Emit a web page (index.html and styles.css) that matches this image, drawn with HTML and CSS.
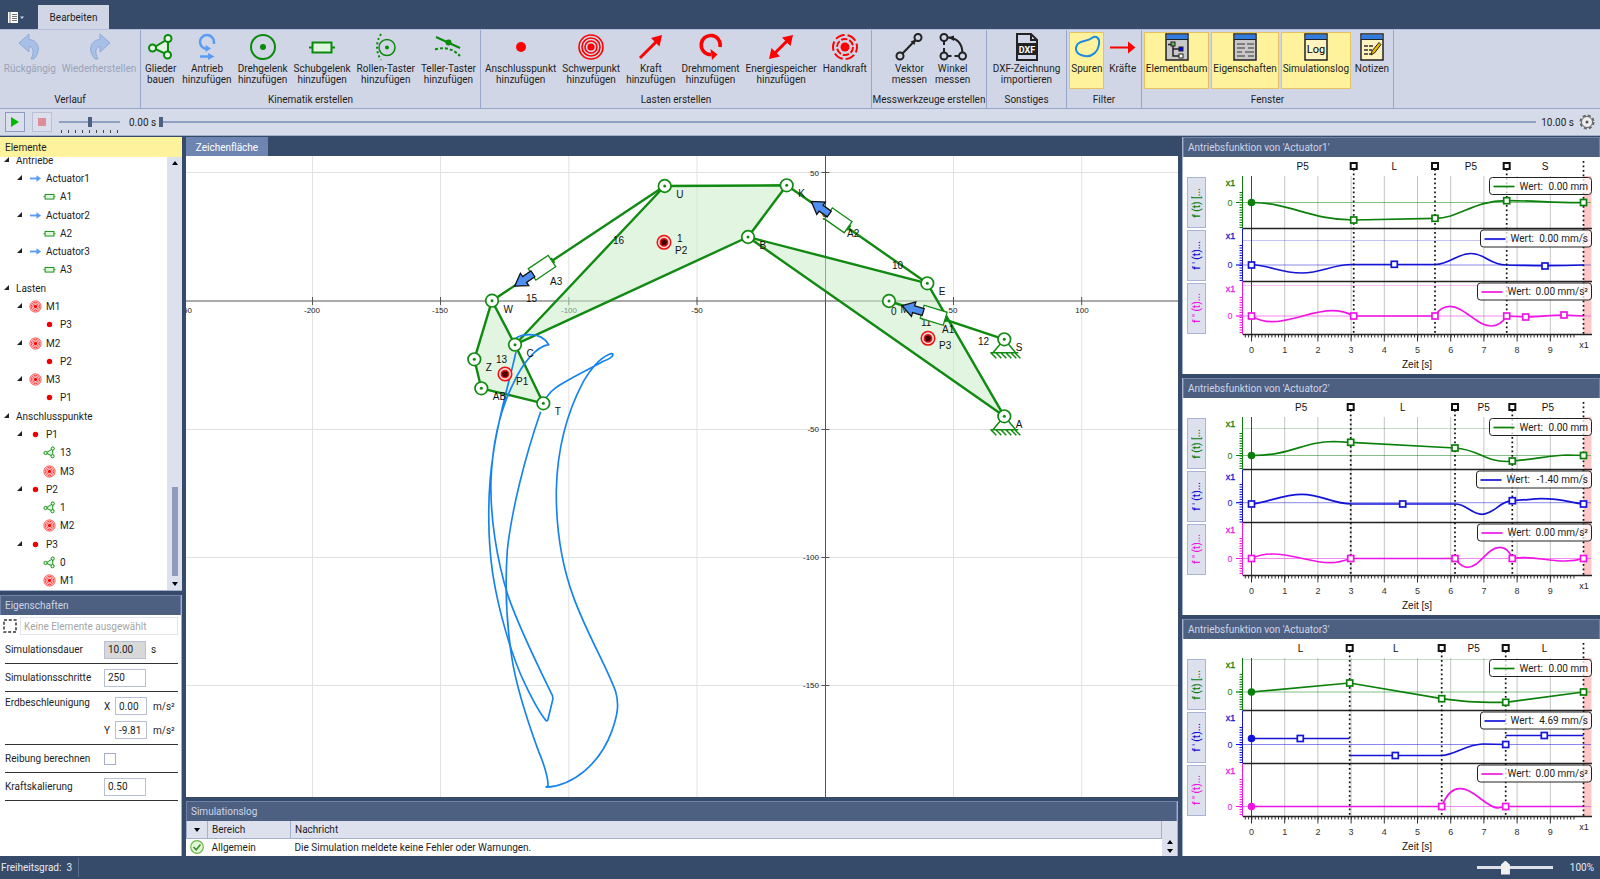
FILE: index.html
```
<!DOCTYPE html>
<html lang="de">
<head>
    <meta charset="UTF-8">
    <meta name="viewport" content="width=device-width, initial-scale=1.0">
    <title>Bearbeiten</title>
    <link rel="stylesheet" href="styles.css">
</head>
<body>
    <!-- shared icons -->
    <svg class="defs" width="0" height="0" aria-hidden="true">
        <symbol id="i-link" viewBox="0 0 28 28">
            <path d="M6 15 L21 6 L21 22 Z" fill="#dff5df" stroke="#0a8a0a" stroke-width="2"/>
            <g fill="#e6f5e8" stroke="#0a8a0a" stroke-width="2"><circle cx="5.500" cy="15" r="3.500"/><circle cx="21" cy="5.500" r="3.500"/><circle cx="20.500" cy="22" r="3.500"/></g>
        </symbol>
        <symbol id="i-mass" viewBox="0 0 28 28">
            <g fill="none" stroke="#f00" stroke-width="1.600"><circle cx="14" cy="14" r="12"/><circle cx="14" cy="14" r="9"/><circle cx="14" cy="14" r="6"/></g>
            <circle cx="14" cy="14" r="3.600" fill="#f00"/>
        </symbol>
        <symbol id="i-slide" viewBox="0 0 28 28">
            <path d="M1 14.500 h3 M24 14.500 h3" stroke="#0a8a0a" stroke-width="2"/>
            <rect x="4.500" y="9.500" width="19" height="10" fill="#e0f5e0" stroke="#0a8a0a" stroke-width="2"/>
        </symbol>
        <symbol id="i-arrow" viewBox="0 0 14 10">
            <path d="M1 5 h8" stroke="#5b9cf3" stroke-width="2"/><path d="M8 1.500 L13 5 L8 8.500 Z" fill="#5b9cf3"/>
        </symbol>
        <symbol id="i-window" viewBox="0 0 28 28">
            <rect x="3" y="1" width="22" height="26" fill="var(--win, #c8c8c8)" stroke="#222" stroke-width="1.500"/>
            <rect x="3.700" y="1.700" width="20.600" height="4.300" fill="#2f7be0"/><path d="M3 6.500 h22" stroke="#222"/>
        </symbol>
    </svg>

    <header class="titlebar">
        <button class="app-menu" type="button" aria-label="Menü">
            <svg width="18" height="13" viewBox="0 0 18 13"><rect x="1" y="1" width="10" height="11" fill="#fff"/><path d="M3 1 v11" stroke="#777"/><path d="M5 3.500 h5 M5 5.500 h5 M5 7.500 h5 M5 9.500 h5" stroke="#777"/><path d="M13 5.500 h4 l-2 2.500 z" fill="#cdd5e6"/></svg>
        </button>
        <button class="ribbon-tab" type="button">Bearbeiten</button>
    </header>

    <nav class="ribbon">
        <section class="group g-verlauf">
            <div class="tools">
                <button class="tool" type="button" disabled><svg viewBox="0 0 28 28"><path d="M3 10 L13 1 V6.500 C22 7 26 17 18 26 H15 C19 19 17 13.500 13 13.500 V19 Z" fill="#9dbbe8" stroke="#7f9fd0"/></svg>Rückgängig</button>
                <button class="tool" type="button" disabled><svg viewBox="0 0 28 28"><path d="M25 10 L15 1 V6.500 C6 7 2 17 10 26 H13 C9 19 11 13.500 15 13.500 V19 Z" fill="#9dbbe8" stroke="#7f9fd0"/></svg>Wiederherstellen</button>
            </div>
            <h2>Verlauf</h2>
        </section>
        <section class="group g-kinematik">
            <div class="tools">
                <button class="tool" type="button"><svg><use href="#i-link"/></svg>Glieder<br>bauen</button>
                <button class="tool" type="button"><svg viewBox="0 0 28 28"><path d="M21 11 V9 A7 7 0 1 0 14 16" fill="none" stroke="#5b9cf3" stroke-width="2.500"/><path d="M12.500 12 L18 15.500 L12.500 19 Z" fill="#5b9cf3"/><path d="M7 23.500 h9" stroke="#5b9cf3" stroke-width="2.500"/><path d="M15 20 L21.500 23.500 L15 27 Z" fill="#5b9cf3"/></svg>Antrieb<br>hinzufügen</button>
                <button class="tool" type="button"><svg viewBox="0 0 28 28"><circle cx="14" cy="14" r="12" fill="none" stroke="#0a8a0a" stroke-width="2"/><circle cx="14" cy="14" r="3" fill="#0a8a0a"/></svg>Drehgelenk<br>hinzufügen</button>
                <button class="tool" type="button"><svg><use href="#i-slide"/></svg>Schubgelenk<br>hinzufügen</button>
                <button class="tool" type="button"><svg viewBox="0 0 28 28"><circle cx="15" cy="14.500" r="8" fill="none" stroke="#0a8a0a" stroke-width="1.500"/><circle cx="15" cy="14.500" r="2" fill="#0a8a0a"/><path d="M9 1 Q1 14 9 27" fill="none" stroke="#0a8a0a" stroke-width="2" stroke-dasharray="2 2.500"/></svg>Rollen-Taster<br>hinzufügen</button>
                <button class="tool" type="button"><svg viewBox="0 0 28 28"><path d="M2 4 L26 15" stroke="#0a8a0a" stroke-width="2"/><circle cx="14.500" cy="9.500" r="3" fill="#0a8a0a"/><path d="M1 16.500 Q15 12 26 23" fill="none" stroke="#0a8a0a" stroke-width="2" stroke-dasharray="3 2"/></svg>Teller-Taster<br>hinzufügen</button>
            </div>
            <h2>Kinematik erstellen</h2>
        </section>
        <section class="group g-lasten">
            <div class="tools">
                <button class="tool" type="button"><svg viewBox="0 0 28 28"><circle cx="14" cy="14" r="5" fill="#f00"/></svg>Anschlusspunkt<br>hinzufügen</button>
                <button class="tool" type="button"><svg><use href="#i-mass"/></svg>Schwerpunkt<br>hinzufügen</button>
                <button class="tool" type="button"><svg viewBox="0 0 28 28"><path d="M3 25 L19 9" stroke="#f00" stroke-width="3"/><path d="M25 2 L22.500 13.500 L14 5 Z" fill="#f00"/></svg>Kraft<br>hinzufügen</button>
                <button class="tool" type="button"><svg viewBox="0 0 28 28"><path d="M23 14 A9.500 9.500 0 1 0 14 21.500" fill="none" stroke="#f00" stroke-width="3.500"/><path d="M13.500 16 L20.500 21.500 L15 27 Z" fill="#f00"/></svg>Drehmoment<br>hinzufügen</button>
                <button class="tool" type="button"><svg viewBox="0 0 28 28"><path d="M8 20 L20 8" stroke="#f00" stroke-width="3"/><path d="M26 2 L23.500 13 L15 4.500 Z M2 26 L4.500 15 L13 23.500 Z" fill="#f00"/></svg>Energiespeicher<br>hinzufügen</button>
                <button class="tool" type="button"><svg viewBox="0 0 28 28"><circle cx="14" cy="14" r="12" fill="none" stroke="#f00" stroke-width="2" stroke-dasharray="9.500 3.066" stroke-dashoffset="4"/><circle cx="14" cy="14" r="8" fill="none" stroke="#f00" stroke-width="2" stroke-dasharray="6.400 1.977"/><circle cx="14" cy="14" r="4.500" fill="#f00"/></svg>Handkraft</button>
            </div>
            <h2>Lasten erstellen</h2>
        </section>
        <section class="group g-mess">
            <div class="tools">
                <button class="tool" type="button"><svg viewBox="0 0 28 28" fill="none" stroke="#222" stroke-width="2"><circle cx="5" cy="23" r="3.500"/><circle cx="23" cy="4.500" r="3.500"/><path d="M7.500 20.500 L20.500 7"/><path d="M21 6.500 L19.500 12 L15.500 8.500 Z" fill="#222" stroke="none"/></svg>Vektor<br>messen</button>
                <button class="tool" type="button"><svg viewBox="0 0 28 28" fill="none" stroke="#222" stroke-width="2"><circle cx="5" cy="4.500" r="3.500"/><circle cx="5" cy="23" r="3.500"/><circle cx="23.500" cy="23" r="3.500"/><path d="M8.500 4.500 Q22.500 5 23.500 19.500"/><path d="M5 8 V19.500 M8.500 23 H20" stroke-dasharray="4 3"/><path d="M9 4.500 L15 2.500 V8 Z" fill="#222" stroke="none"/></svg>Winkel<br>messen</button>
            </div>
            <h2>Messwerkzeuge erstellen</h2>
        </section>
        <section class="group g-sonstiges">
            <div class="tools">
                <button class="tool" type="button"><svg viewBox="0 0 28 28"><path d="M4 1 H18 L24 7 V27 H4 Z M18 1 V7 H24" fill="none" stroke="#222" stroke-width="2"/><rect x="3" y="10" width="22" height="12" fill="#222"/><text x="14" y="19.500" text-anchor="middle" class="dxf">DXF</text></svg>DXF-Zeichnung<br>importieren</button>
            </div>
            <h2>Sonstiges</h2>
        </section>
        <section class="group g-filter">
            <div class="tools">
                <button class="tool on" type="button"><svg viewBox="0 0 28 28"><path d="M4 12 C6 7 14 9 19 5 C23 2 27 5 26 11 C25 19 19 24 12 23 C5 22 1 18 4 12 Z" fill="none" stroke="#1a8ce0" stroke-width="2"/></svg>Spuren</button>
                <button class="tool" type="button"><svg viewBox="0 0 28 28"><path d="M1 14.500 H20" stroke="#f00" stroke-width="2"/><path d="M19 8.500 L26.500 14.500 L19 20.500 Z" fill="#f00"/></svg>Kräfte</button>
            </div>
            <h2>Filter</h2>
        </section>
        <section class="group g-fenster">
            <div class="tools">
                <button class="tool on" type="button"><svg viewBox="0 0 28 28"><use href="#i-window" class="wide"/><path d="M5 11.500 H10 V23 H17 M10 16 H17" fill="none" stroke="#222" stroke-width="1.500"/><g stroke="#222"><rect x="8" y="9" width="4" height="4" fill="#5cb85c"/><rect x="16" y="14" width="4" height="4" fill="#00f"/><rect x="16" y="21" width="4" height="4" fill="#fff"/></g></svg>Elementbaum</button>
                <button class="tool on" type="button"><svg viewBox="0 0 28 28"><use href="#i-window"/><path d="M6 11 h8 M6 15 h8 M6 19 h5 M6 23 h8 M16 11 h7 M17 15 h6 M14 19 h9 M17 23 h6" stroke="#666" stroke-width="1.500"/></svg>Eigenschaften</button>
                <button class="tool on pale" type="button"><svg viewBox="0 0 28 28"><use href="#i-window"/><text x="14" y="20" text-anchor="middle" class="log">Log</text></svg>Simulationslog</button>
                <button class="tool pale" type="button"><svg viewBox="0 0 28 28"><use href="#i-window"/><path d="M6 13 h9 M6 17 h8 M6 21 h7" stroke="#333" stroke-width="1.500" stroke-dasharray="4 1"/><path d="M13 22 L14 18 L21 9.500 L23 11.500 L16.500 20 Z" fill="#f0b400" stroke="#222"/></svg>Notizen</button>
            </div>
            <h2>Fenster</h2>
        </section>
    </nav>

    <div class="player">
        <button class="play" type="button" aria-label="Start"><svg width="8" height="10" viewBox="0 0 8 10"><path d="M0 0 L8 5 L0 10 Z" fill="#0b0"/></svg></button>
        <button class="stop" type="button" aria-label="Stopp" disabled><svg width="8" height="8"><rect width="8" height="8" fill="#dd8f99"/></svg></button>
        <div class="speed">
            <input type="range" class="track" min="0" max="8" value="4" aria-label="Geschwindigkeit">
            <svg width="61" height="3"><path d="M0 1.500 H61" stroke="#444" stroke-width="3" stroke-dasharray="1 6" stroke-dashoffset="-2"/></svg>
        </div>
        <span>0.00 s</span>
        <input type="range" class="track time" min="0" max="250" value="0" aria-label="Zeit">
        <span>10.00 s</span>
        <svg class="gear" width="16" height="16" viewBox="0 0 16 16"><circle cx="8" cy="8" r="6.500" fill="none" stroke="#666" stroke-width="2" stroke-dasharray="3 2.100"/><circle cx="8" cy="8" r="5.500" fill="#eee" stroke="#666"/><circle cx="8" cy="8" r="1.500" fill="#555"/></svg>
    </div>

    <main class="workspace">
        <div class="left">
            <section class="panel elements">
                <h3>Elemente</h3>
                <div class="tree-wrap">
                    <ul class="tree" id="tree"></ul>
                    <div class="scrollbar"><svg width="6" height="4"><path d="M0 4 L3 0 L6 4 Z"/></svg><div class="thumb"></div><svg width="6" height="4"><path d="M0 0 L3 4 L6 0 Z"/></svg></div>
                </div>
            </section>
            <section class="panel props">
                <h3>Eigenschaften</h3>
                <form>
                    <div class="selection">
                        <svg width="14" height="14"><rect x="1" y="1" width="12" height="12" fill="none" stroke="#333" stroke-width="1.500" stroke-dasharray="3 1.800"/></svg>
                        <input type="text" placeholder="Keine Elemente ausgewählt" aria-label="Auswahl" disabled>
                    </div>
                    <div class="prop"><label for="dauer">Simulationsdauer</label><input type="text" id="dauer" value="10.00" readonly><span class="unit">s</span></div>
                    <div class="prop"><label for="schritte">Simulationsschritte</label><input type="text" id="schritte" value="250"></div>
                    <div class="prop gravity">
                        <span class="name">Erdbeschleunigung</span>
                        <div class="axes">
                            <div><label for="gx">X</label><input type="text" id="gx" value="0.00"><span>m/s²</span></div>
                            <div><label for="gy">Y</label><input type="text" id="gy" value="-9.81"><span>m/s²</span></div>
                        </div>
                    </div>
                    <div class="prop"><label for="reibung">Reibung berechnen</label><input type="checkbox" id="reibung"></div>
                    <div class="prop"><label for="skala">Kraftskalierung</label><input type="text" id="skala" value="0.50"></div>
                </form>
            </section>
        </div>

        <div class="center">
            <div class="doc-tabs"><button type="button">Zeichenfläche</button></div>
            <div class="canvas">
                <svg id="drawing" viewBox="0 0 992 641" preserveAspectRatio="xMidYMid slice">
                    <g class="grid">
                        <path d="M126.500 0 V641 M254.500 0 V641 M382.800 0 V641 M511 0 V641 M767.500 0 V641 M895.700 0 V641"/>
                        <path d="M0 16.500 H992 M0 273.500 H992 M0 401.500 H992 M0 529.500 H992"/>
                    </g>
                    <path class="axis" d="M0 145 H992 M639.500 0 V641 M126.500 141 v8 M254.500 141 v8 M382.800 141 v8 M511 141 v8 M767.500 141 v8 M895.700 141 v8 M635.500 16.500 h8 M635.500 273.500 h8 M635.500 401.500 h8 M635.500 529.500 h8"/>
                    <g class="ticks" text-anchor="middle">
                        <text x="-2" y="157">-250</text><text x="126" y="157">-200</text><text x="254" y="157">-150</text><text x="383" y="157">-100</text><text x="511" y="157">-50</text><text x="767" y="157">50</text><text x="896" y="157">100</text>
                    </g>
                    <g class="ticks" text-anchor="end">
                        <text x="633" y="20">50</text><text x="633" y="276">-50</text><text x="633" y="404">-100</text><text x="633" y="532">-150</text>
                    </g>
                    <g class="link">
                        <path d="M478.700 30 L600.700 29.300 L562 81 L329 188.700 Z"/>
                        <path d="M562 81 L741.300 127.300 L818.300 260.300 Z"/>
                        <path d="M306 144.700 L329 188.700 L357.300 247.300 L295.300 232.300 L288.300 203.300 Z"/>
                        <path d="M306 144.700 L478.700 30 M600.700 29.300 L741.300 127.300 M703 145 L818.300 183.300"/>
                    </g>
                    <!-- traces of C and T -->
                    <g class="trace" transform="translate(254 174) scale(.3333)">
                        <path d="M228 65 C215 130 175 260 160 370 C142 480 142 620 158 730 C175 840 215 980 255 1062 C280 1115 300 1150 318 1172 Q322 1175 324 1168 L338 1110 Q341 1100 332 1086 C300 1020 240 900 205 800 C170 690 150 560 153 450 C158 330 185 230 220 160 C250 95 290 50 326 44 C315 25 300 14 270 14 C250 14 235 20 228 24"/>
                        <path d="M302 245 C255 380 215 540 202 660 C195 760 198 870 215 980 C230 1080 265 1180 295 1262 C315 1310 325 1340 324 1368 L317 1372 C400 1368 480 1300 515 1205 C535 1150 537 1120 527 1085 C500 1010 440 910 400 800 C360 690 348 580 349 480 C352 350 385 240 430 155 C455 112 480 85 505 74 Q519 68 519 74 Q517 84 490 94 C440 122 380 150 345 175 Q325 190 312 215"/>
                    </g>
                    <g id="mechanism"></g>
                </svg>
            </div>
            <section class="panel log-panel">
                <h3>Simulationslog</h3>
                <div class="log-body">
                    <table>
                        <thead><tr><th class="c-icon"><svg width="6" height="4"><path d="M0 0 H6 L3 4 Z"/></svg></th><th class="c-area">Bereich</th><th>Nachricht</th></tr></thead>
                        <tbody><tr><td class="c-icon"><svg width="14" height="14" viewBox="0 0 14 14"><circle cx="7" cy="7" r="6.300" fill="#e4f7d8" stroke="#6cb84a" stroke-width="1.200"/><path d="M3.500 7 L6.200 9.800 L10.500 4.500" fill="none" stroke="#2e8f1e" stroke-width="1.500"/></svg></td><td>Allgemein</td><td>Die Simulation meldete keine Fehler oder Warnungen.</td></tr></tbody>
                    </table>
                    <div class="log-scroll"><svg width="6" height="4"><path d="M0 4 L3 0 L6 4 Z"/></svg><svg width="6" height="4"><path d="M0 0 L3 4 L6 0 Z"/></svg></div>
                </div>
            </section>
        </div>

        <div class="right" id="charts"></div>
    </main>

    <footer class="status">
        <span class="dof">Freiheitsgrad: &nbsp;3</span>
        <input type="range" class="zoom" min="0" max="100" value="36" aria-label="Zoom">
        <span>100%</span>
    </footer>

    <script src="app.js"></script>
</body>
</html>
```
FILE: styles.css
```
* {
    box-sizing: border-box;
}
body {
    margin: 0;
    height: 100vh;
    display: flex;
    flex-direction: column;
    background-color: #364b6a;
    font-family: Roboto, "Noto Sans", sans-serif;
    font-size: 10px;
    line-height: 11px;
    color: #1e1e1e;
    overflow: hidden;
}
button, input {
    font: inherit;
    color: inherit;
    margin: 0;
}
h2, h3 {
    margin: 0;
    font-size: 10px;
    font-weight: normal;
}
.defs {
    position: absolute;
}

/* title bar */
.titlebar {
    display: flex;
    align-items: flex-end;
    height: 29px;
    flex: none;
}
.app-menu {
    width: 38px;
    height: 24px;
    padding: 0 8px 0 2px;
    border: none;
    background: none;
}
.app-menu svg {
    vertical-align: middle;
}
.ribbon-tab {
    width: 71px;
    height: 24px;
    padding: 0;
    border: none;
    background-color: #d0d6e6;
}

/* ribbon */
.ribbon {
    display: flex;
    flex: none;
    height: 80px;
    background-color: #d0d6e6;
    border-top: 1px solid #b3bddb;
    border-bottom: 1px solid #99a6cc;
}
.group {
    display: flex;
    flex-direction: column;
    align-items: center;
    flex: none;
    border-right: 1px solid #99a6cc;
    padding-top: 2px;
}
.g-verlauf { width: 141px; }
.g-kinematik { width: 340px; }
.g-lasten { width: 391px; }
.g-mess { width: 115px; }
.g-sonstiges { width: 80px; }
.g-filter { width: 75px; }
.g-fenster { width: 252px; }
.group h2 {
    margin-top: 5px;
    white-space: nowrap;
}
.tools {
    display: flex;
    justify-content: space-evenly;
    width: 100%;
    height: 57px;
}
.g-mess .tools {
    justify-content: center;
    gap: 4px;
    padding-left: 4px;
}
.tool {
    display: flex;
    flex-direction: column;
    align-items: center;
    padding: 0 1px;
    border: 1px solid transparent;
    background: none;
    white-space: nowrap;
    text-align: center;
}
.tool:disabled {
    color: #9ba3b8;
}
.tool:disabled svg {
    opacity: 0.8;
}
.tool svg {
    width: 28px;
    height: 28px;
    margin-bottom: 2px;
}
.tool br {
    display: block;
}
.tool.on {
    background-color: #fff29d;
    border-color: #e5c365;
}
.pale {
    --win: #fff3c0;
}
.dxf {
    font-size: 9px;
    font-weight: bold;
    fill: #fff;
}
.log {
    font-size: 11px;
}

/* player */
.player {
    display: flex;
    align-items: center;
    flex: none;
    height: 27px;
    padding: 0 5px;
    background-color: #d6dbe9;
    border-bottom: 1px solid #a3b0cc;
}
.player button {
    width: 20px;
    height: 20px;
    margin-right: 7px;
    padding: 0;
    background-color: #dce0ec;
    border: 1px solid #8e9bc0;
    display: flex;
    align-items: center;
    justify-content: center;
}
.player .stop {
    border-color: #b9c1d8;
}
.speed {
    width: 61px;
    height: 17px;
    margin: 7px 9px 0 0;
    display: flex;
    flex-direction: column;
}
.speed input {
    width: 61px;
    margin-bottom: 3px;
}
.track {
    appearance: none;
    height: 10px;
    background: linear-gradient(#8f9fc0, #8f9fc0) center / 100% 2px no-repeat;
}
.track::-webkit-slider-thumb {
    appearance: none;
    width: 4px;
    height: 10px;
    background-color: #4d6082;
}
.time {
    flex: 1;
    margin: 0 5px 0 3px;
}
.gear {
    margin-left: 5px;
}

/* workspace */
.workspace {
    display: grid;
    grid-template-columns: 182px 1fr 418px;
    gap: 4px;
    flex: 1;
    min-height: 0;
    padding-top: 1px;
}
.left, .center, .right {
    display: flex;
    flex-direction: column;
    min-height: 0;
    min-width: 0;
}
.left {
    gap: 4px;
}
.panel {
    display: flex;
    flex-direction: column;
    background-color: #fff;
}
.panel h3 {
    flex: none;
    height: 20px;
    padding: 4px 4px 0;
    background-color: #4d6082;
    border: 1px solid #6f83ab;
    border-bottom: none;
    color: #cdd5e6;
}
.elements {
    flex: 1;
    min-height: 0;
    border-bottom: 1px solid #a3b0cc;
}
.elements h3 {
    background-color: #fff29d;
    border-color: #fff29d;
    color: #1e1e1e;
}
.tree-wrap {
    display: flex;
    flex: 1;
    min-height: 0;
    overflow: hidden;
}
.tree {
    display: grid;
    grid-auto-rows: 1fr;
    flex: 1;
    list-style: none;
    margin: -6px 0 0;
    padding: 0;
}
.tree li {
    display: flex;
    align-items: center;
    padding-left: 4px;
}
.tree .level1 {
    padding-left: 17px;
}
.tree .level2 {
    padding-left: 43px;
}
.tree .open {
    width: 5px;
    height: 5px;
    margin: 0 7px 2px 0;
}
.tree .icon {
    width: 13px;
    height: 13px;
    margin-right: 4px;
}
.scrollbar {
    display: flex;
    flex-direction: column;
    align-items: center;
    width: 15px;
    padding: 4px 0;
    background-color: #dde1ee;
}
.thumb {
    width: 6px;
    height: 89px;
    margin: auto 0 6px;
    background-color: #8f9bbd;
}
.props {
    height: 261px;
    border-right: 1px solid #a3b0cc;
}
.props form {
    padding: 2px 3px 0 5px;
}
.selection {
    display: flex;
    align-items: center;
    gap: 3px;
    height: 18px;
    margin: 0 0 1px -2px;
}
.selection input {
    flex: 1;
    min-width: 0;
    height: 18px;
    padding: 0 3px;
    background-color: #fff;
    border: 1px solid #e2e4ee;
}
.selection input::placeholder {
    color: #a5a5a5;
}
.prop {
    display: flex;
    align-items: center;
    height: 28px;
    border-bottom: 1px solid #333;
}
.prop label, .prop .name {
    width: 99px;
}
.prop input[type="text"] {
    width: 42px;
    height: 18px;
    padding: 0 3px;
    border: 1px solid #b9bfd6;
    background-color: #fff;
}
.prop input[readonly] {
    background-color: #d8d8d8;
}
.prop input[type="checkbox"] {
    appearance: none;
    width: 12px;
    height: 12px;
    border: 1px solid #a5add0;
}
.unit {
    margin-left: 5px;
}
.gravity {
    height: 53px;
    align-items: flex-start;
}
.gravity .name {
    margin-top: 5px;
}
.axes {
    display: grid;
    gap: 6px;
    margin-top: 5px;
}
.axes div {
    display: flex;
    align-items: center;
}
.prop .axes label {
    width: 11px;
}
.prop .axes input {
    width: 32px;
    margin-right: 6px;
}

/* drawing area */
.doc-tabs {
    display: flex;
    height: 19px;
    flex: none;
}
.doc-tabs button {
    width: 82px;
    padding: 2px 0 0;
    border: none;
    background-color: #6e85b2;
    color: #fff;
}
.canvas {
    flex: 1;
    min-height: 0;
    margin-bottom: 4px;
    background-color: #fff;
}
.canvas svg {
    display: block;
    width: 100%;
    height: 100%;
}
.canvas text, .chart text {
    font-family: "Liberation Sans", Arial, sans-serif;
}
.grid path {
    stroke: #e2e2e2;
    fill: none;
}
.axis {
    stroke: #555;
    fill: none;
}
.ticks {
    font-size: 8px;
    fill: #222;
}
.trace path {
    fill: none;
    stroke: #1583ee;
    stroke-width: 5;
}
.link path {
    fill: #c8edc8;
    fill-opacity: 0.55;
    stroke: #118a11;
    stroke-width: 2.4;
    stroke-linejoin: round;
}
.names {
    font-size: 10px;
    fill: #111;
}

/* log */
.log-panel {
    flex: none;
    height: 55px;
    border-right: 1px solid #a3b0cc;
}
.log-body {
    display: flex;
    flex: 1;
}
.log-panel table {
    flex: 1;
    border-collapse: collapse;
    table-layout: fixed;
}
.log-panel th, .log-panel td {
    padding: 0 4px;
    text-align: left;
    font-weight: normal;
    white-space: nowrap;
}
.log-panel th {
    height: 17px;
    background-color: #dde1ee;
    border: 1px solid #a3b0cc;
    border-top: none;
}
.log-panel td {
    height: 18px;
}
.log-panel .c-icon {
    width: 21px;
    padding: 0;
    text-align: center;
}
.log-panel .c-icon svg {
    vertical-align: middle;
}
.log-panel .c-area {
    width: 83px;
}
.log-scroll {
    display: flex;
    flex-direction: column;
    align-items: center;
    justify-content: space-between;
    width: 15px;
    padding: 19px 0 3px;
    background-color: #dde1ee;
}

/* drive function charts */
.right {
    gap: 4px;
}
.chart {
    flex: 1;
    min-height: 0;
    border-left: 1px solid #a3b0cc;
}
.chart-body {
    display: flex;
    flex: 1;
    min-height: 0;
    padding-left: 4px;
}
.functions {
    display: grid;
    grid-auto-rows: 51px;
    gap: 2px;
    align-content: start;
    width: 19px;
    padding-top: 20px;
}
.functions button {
    padding: 0;
    border: 1px solid #a9b3d3;
    background-color: #dde1ee;
    font-size: 10px;
    font-weight: 500;
    writing-mode: vertical-rl;
}
.functions span {
    display: inline-block;
    transform: rotate(180deg);
}
.chart-body > svg {
    flex: 1;
    min-width: 0;
    height: 217px;
}
.chart .small {
    font-size: 9px;
}
.chart .segment {
    font-size: 10px;
    fill: #111;
}
.chart .value {
    font-family: Roboto, "Noto Sans", sans-serif;
    font-size: 10px;
    fill: #222;
}

/* status bar */
.status {
    display: flex;
    align-items: center;
    flex: none;
    height: 23px;
    padding: 0 6px 0 1px;
    color: #e6eaf3;
}
.dof {
    width: 78px;
    padding: 4px 0;
    margin-right: auto;
    border-right: 1px solid #5a6f92;
    white-space: nowrap;
}
.zoom {
    appearance: none;
    width: 76px;
    height: 16px;
    margin-right: 17px;
    background: linear-gradient(#dde1ea, #dde1ea) center / 100% 3px no-repeat;
}
.zoom::-webkit-slider-thumb {
    appearance: none;
    width: 9px;
    height: 14px;
    background-color: #f0f0f0;
    clip-path: polygon(50% 0, 100% 30%, 100% 100%, 0 100%, 0 30%);
}
```
FILE: app.js
```
// element tree: [level, icon, name]
const tree = [
    [0, '', 'Antriebe'],
    [1, 'arrow', 'Actuator1'], [2, 'slide', 'A1'],
    [1, 'arrow', 'Actuator2'], [2, 'slide', 'A2'],
    [1, 'arrow', 'Actuator3'], [2, 'slide', 'A3'],
    [0, '', 'Lasten'],
    [1, 'mass', 'M1'], [2, 'dot', 'P3'],
    [1, 'mass', 'M2'], [2, 'dot', 'P2'],
    [1, 'mass', 'M3'], [2, 'dot', 'P1'],
    [0, '', 'Anschlusspunkte'],
    [1, 'dot', 'P1'], [2, 'link', '13'], [2, 'mass', 'M3'],
    [1, 'dot', 'P2'], [2, 'link', '1'], [2, 'mass', 'M2'],
    [1, 'dot', 'P3'], [2, 'link', '0'], [2, 'mass', 'M1']
];

document.getElementById('tree').innerHTML = tree.map(([level, icon, name]) => {
    const open = level < 2 ? '<svg class="open"><path d="M5 0 V5 H0 Z" fill="#222"/></svg>' : '';
    let pic = '';
    if (icon === 'dot') {
        pic = '<svg class="icon" viewBox="0 0 13 13"><circle cx="6.5" cy="6.5" r="2.7" fill="#e00"/></svg>';
    } else if (icon) {
        pic = `<svg class="icon"><use href="#i-${icon}"/></svg>`;
    }
    return `<li class="level${level}">${open}${pic}<span>${name}</span></li>`;
}).join('');

// mechanism
const joints = {
    U: [478.7, 30], K: [600.7, 29.3], B: [562, 81], W: [306, 144.7], C: [329, 188.7],
    Z: [288.3, 203.3], AB: [295.3, 232.3], T: [357.3, 247.3], E: [741.3, 127.3],
    M: [703, 145], S: [818.3, 183.3], A: [818.3, 260.3]
};
const cylinders = [[356, 111.7, 146], [652.3, 64.3, 215], [747.7, 159.3, 197]];
const masses = [[478, 86.3], [319, 218], [742, 182.3]];
const names = [
    ['1', 491, 86], ['P2', 489, 98], ['16', 427, 88], ['A3', 364, 129], ['15', 340, 146],
    ['13', 310, 207], ['P1', 330, 229], ['9', 636, 64], ['A2', 661, 81], ['10', 706, 113],
    ['0', 705, 159], ['11', 735, 170], ['A1', 756, 177], ['P3', 753, 193], ['12', 792, 189]
];

let out = '<g class="names">';
for (const [name, x, y] of names) out += `<text x="${x}" y="${y}">${name}</text>`;
for (const name in joints) out += `<text x="${joints[name][0] + 11.5}" y="${joints[name][1] + 12}">${name}</text>`;
out += '</g>';
for (const name of ['S', 'A']) {
    const [x, y] = joints[name];
    out += `<path transform="translate(${x} ${y})" d="M0 0 L-11 13 M0 0 L11 13 M-14 13.400 H14 M-13 14 l5 5 M-8 14 l5 5 M-3 14 l5 5 M2 14 l5 5 M7 14 l5 5 M11 14 l5 5" fill="none" stroke="#118a11" stroke-width="1.500"/>`;
}
for (const [x, y, angle] of cylinders) {
    out += `<g transform="translate(${x} ${y}) rotate(${angle})">
        <rect x="-12" y="-6.800" width="24" height="13.600" fill="#fff" stroke="#118a11" stroke-width="1.300"/>
        <path d="M-13 -3 V3" stroke="#118a11" stroke-width="2"/>
        <path d="M11 -3.500 H21 V-7.500 L33 0 L21 7.500 V3.500 H11 Z" fill="#4f8ff0" stroke="#111" stroke-width="1.300"/></g>`;
}
for (const name in joints) {
    const [x, y] = joints[name];
    out += `<circle cx="${x}" cy="${y}" r="6.300" fill="#fff" stroke="#118a11" stroke-width="1.700"/><circle cx="${x}" cy="${y}" r="1.500" fill="#118a11"/>`;
}
for (const [x, y] of masses) {
    out += `<g transform="translate(${x} ${y})"><circle r="6.800" fill="#fbd5d5" stroke="#e11" stroke-width="1.500"/><circle r="3.600" fill="#400" stroke="#d11" stroke-width="1.500"/></g>`;
}
document.getElementById('mechanism').innerHTML = out;

// drive functions, one entry per actuator
const colors = ['#0a800a', '#1414d8', '#f015e6'];
const charts = [
    {
        name: 'Actuator1', limits: [171.7, 253, 324.7], types: ['P5', 'L', 'P5', 'S'],
        rows: [
            { zero: 45.5, ticks: 35, faint: 0, unit: '0.00 mm', box: 102, marks: [[171.7, 63], [253, 61.3], [324.7, 43.7], [401.5, 45.5]], dot: 45.5,
              d: 'M69.5 45.5 C108 45.5 128 63 171.7 63 L253 61.3 C278 61.3 290 43.7 324.7 43.7 C350 43.5 375 46 401.5 45.5' },
            { zero: 108, ticks: 88, faint: 83.5, unit: '0.00 mm/s', box: 111, marks: [[69.5, 108], [212.3, 107.3], [363, 109]],
              d: 'M69.5 107.5 C90 109 98 116 120 116 C140 116 150 107.5 170 107.5 H253 C268 107.5 275 96.5 289 96.5 C303 96.5 308 108 324 108 C350 108.5 363 109.5 401.5 108' },
            { zero: 159, ticks: 140, faint: 128.5, unit: '0.00 mm/s²', box: 114, marks: [[69.5, 159], [171.7, 159], [253, 159], [324.7, 159], [343.7, 160], [382, 158]],
              d: 'M69.5 159 C76 163 82 164.7 89.7 164.7 C110 164.7 130 153.7 150.3 153.7 C159 153.7 166 156 171.7 159 H253 C257 152 262 149.3 268 149.3 C282 149.3 295 169 309 169 C316 169 321 165 324.7 159 L344 160 C360 159.5 370 158 382 158 L401.5 159' }
        ]
    },
    {
        name: 'Actuator2', limits: [168.7, 273, 330.3], types: ['P5', 'L', 'P5', 'P5'],
        rows: [
            { zero: 57.5, ticks: 35, faint: 30.5, unit: '0.00 mm', box: 102, marks: [[168.7, 44.3], [273, 50], [330.3, 63], [401.5, 57.5]], dot: 57.5,
              d: 'M69.5 57.5 C110 57.8 120 43.5 152 43.5 L168.7 44.3 L273 50 C297 51.5 302 63.5 325 63.5 L330.3 63 C355 61 370 57 385 57 L401.5 57.5' },
            { zero: 104.7, ticks: 86, faint: 0, unit: '-1.40 mm/s', box: 115, marks: [[69.5, 106], [220.7, 106], [330.3, 102.7], [401.5, 106]],
              d: 'M69.5 106 C85 105 100 96.3 120 96.3 C140 96.3 150 106 170 106 H273 C285 106 289 116.3 300 116.3 C312 116.3 318 102.7 330.3 102.7 C345 102 350 100.7 360 100.7 C380 100.7 388 104.5 401.5 106' },
            { zero: 160.5, ticks: 140, faint: 0, unit: '0.00 mm/s²', box: 114, marks: [[69.5, 160.5], [168.7, 160.5], [273, 160.5], [330.3, 160.5], [401.5, 160.5]],
              d: 'M69.5 160.5 C76 157 82 156 90.7 156 C110 156 130 164.7 148 164.7 C157 164.7 162 163 168.7 160.5 H273 C277 166 281 169.3 285.3 169.3 C298 169.3 305 149.3 318 149.3 C324 149.3 328 154 330.3 160.5 C350 157 365 163.5 383 163 Q393 163 401.5 160.5' }
        ]
    },
    {
        name: 'Actuator3', limits: [167.7, 259.7, 323.7], types: ['L', 'L', 'P5', 'L'],
        rows: [
            { zero: 53, ticks: 35, faint: 20.5, unit: '0.00 mm', box: 102, marks: [[167.7, 44], [259.7, 59.7], [323.7, 63.3], [401.5, 53]], dot: 53,
              d: 'M69.5 53 L167.7 44 L259.7 59.7 C280 62.5 290 63.5 323.7 63.3 L401.5 53' },
            { zero: 105.5, ticks: 88, faint: 0, unit: '4.69 mm/s', box: 111, marks: [[118.3, 99.5], [213.3, 116.5], [323.7, 105.5], [362.3, 96.5]], dot: 99.5,
              d: 'M69.5 99.5 H167.7 M167.7 116.5 H259.7 C272 116.5 285 105 301 105 L323.7 105.5 M323.7 96.5 H401.5' },
            { zero: 167.5, ticks: 140, faint: 0, unit: '0.00 mm/s²', box: 114, marks: [[259.7, 167.5], [323.7, 167.5]], dot: 167.5,
              d: 'M69.5 167.5 H259.7 C264 157 269 149.7 278 149.7 C292 149.7 305 169 316 169 L323.7 167.5 H401.5' }
        ]
    }
];

function drawChart(c) {
    const top = [19, 71.5, 124.5, 177.5];
    let s = '<rect x="401.5" y="19" width="8" height="158.500" fill="#ffc8c8"/>';
    for (let i = 0; i < 10; i++) {
        const x = 69.5 + i * 33.2;
        s += `<path d="M${x} 19 V177.5" stroke="${i ? '#c4c4c4' : '#444'}"/>`;
        s += `<path d="M${x} 177.5 v7" stroke="#333"/>`;
        s += `<text class="small" x="${x}" y="196" text-anchor="middle" fill="#333">${i}</text>`;
    }
    s += '<path d="M62 179 H394" stroke="#333" stroke-width="3" stroke-dasharray="1 2.320" stroke-dashoffset="-.8"/>';
    c.rows.forEach((r, i) => {
        const color = colors[i];
        s += `<path d="M60.500 ${top[i]} V${top[i + 1]}" stroke="${color}"/>`;
        s += `<path d="M59 ${r.ticks} V${top[i + 1]}" stroke="${color}" stroke-width="3" stroke-dasharray="1 1.500"/>`;
        s += `<path d="M54 ${r.zero} H409" stroke="${color}" stroke-opacity=".5"/><path d="M54 ${r.zero} h6" stroke="${color}"/>`;
        if (r.faint) s += `<path d="M61 ${r.faint} H409" stroke="${color}" stroke-opacity=".25"/>`;
        s += `<text class="small" x="48" y="${r.zero + 3}" text-anchor="middle" fill="${color}">0</text>`;
        s += `<text class="small" x="48.500" y="${top[i] + 10}" text-anchor="middle" fill="${color}" stroke="${color}" stroke-width=".3">x1</text>`;
        s += `<path d="M61 ${top[i + 1]} H410" stroke="#222" stroke-width="1.300"/>`;
        s += `<path d="${r.d}" fill="none" stroke="${color}" stroke-width="1.700"/>`;
    });
    for (const x of [...c.limits, 401.5]) s += `<path d="M${x} ${x > 400 ? 4 : 12} V178" stroke="#111" stroke-width="1.700" stroke-dasharray="1.700 2.800"/>`;
    for (const x of c.limits) s += `<rect x="${x - 3}" y="6" width="6" height="6" fill="#fff" stroke="#111" stroke-width="2"/>`;
    const ends = [69.5, ...c.limits, 401.5];
    c.types.forEach((t, i) => {
        s += `<text class="segment" x="${(ends[i] + ends[i + 1]) / 2}" y="13" text-anchor="middle">${t}</text>`;
    });
    c.rows.forEach((r, i) => {
        const color = colors[i], x = 409.5 - r.box, y = top[i] + 1.5;
        if (r.dot) s += `<circle cx="69.500" cy="${r.dot}" r="3.800" fill="${color}"/>`;
        for (const [mx, my] of r.marks) s += `<rect x="${mx - 3}" y="${my - 3}" width="6" height="6" fill="#fff" stroke="${color}" stroke-width="1.700"/>`;
        s += `<rect x="${x}" y="${y}" width="${r.box}" height="17" rx="3" fill="#fff" fill-opacity=".75" stroke="#222"/>`;
        s += `<path d="M${x + 4} ${y + 9} h21" stroke="${color}" stroke-width="1.700"/>`;
        s += `<text class="value" x="${x + 30}" y="${y + 12}">Wert:</text><text class="value" x="406" y="${y + 12}" text-anchor="end">${r.unit}</text>`;
    });
    s += '<text class="small" x="402" y="191" text-anchor="middle" fill="#222">x1</text>';
    s += '<text class="segment" x="235" y="211" text-anchor="middle">Zeit [s]</text>';
    return s;
}

document.getElementById('charts').innerHTML = charts.map(c => `
    <section class="panel chart">
        <h3>Antriebsfunktion von '${c.name}'</h3>
        <div class="chart-body">
            <div class="functions">
                ${['f (t) [...', "f ' (t)...", "f '' (t)..."].map((t, i) => `<button type="button" style="color: ${colors[i]}"><span>${t}</span></button>`).join('')}
            </div>
            <svg viewBox="24 0 394 217" preserveAspectRatio="xMinYMin meet">${drawChart(c)}</svg>
        </div>
    </section>`).join('');
```
